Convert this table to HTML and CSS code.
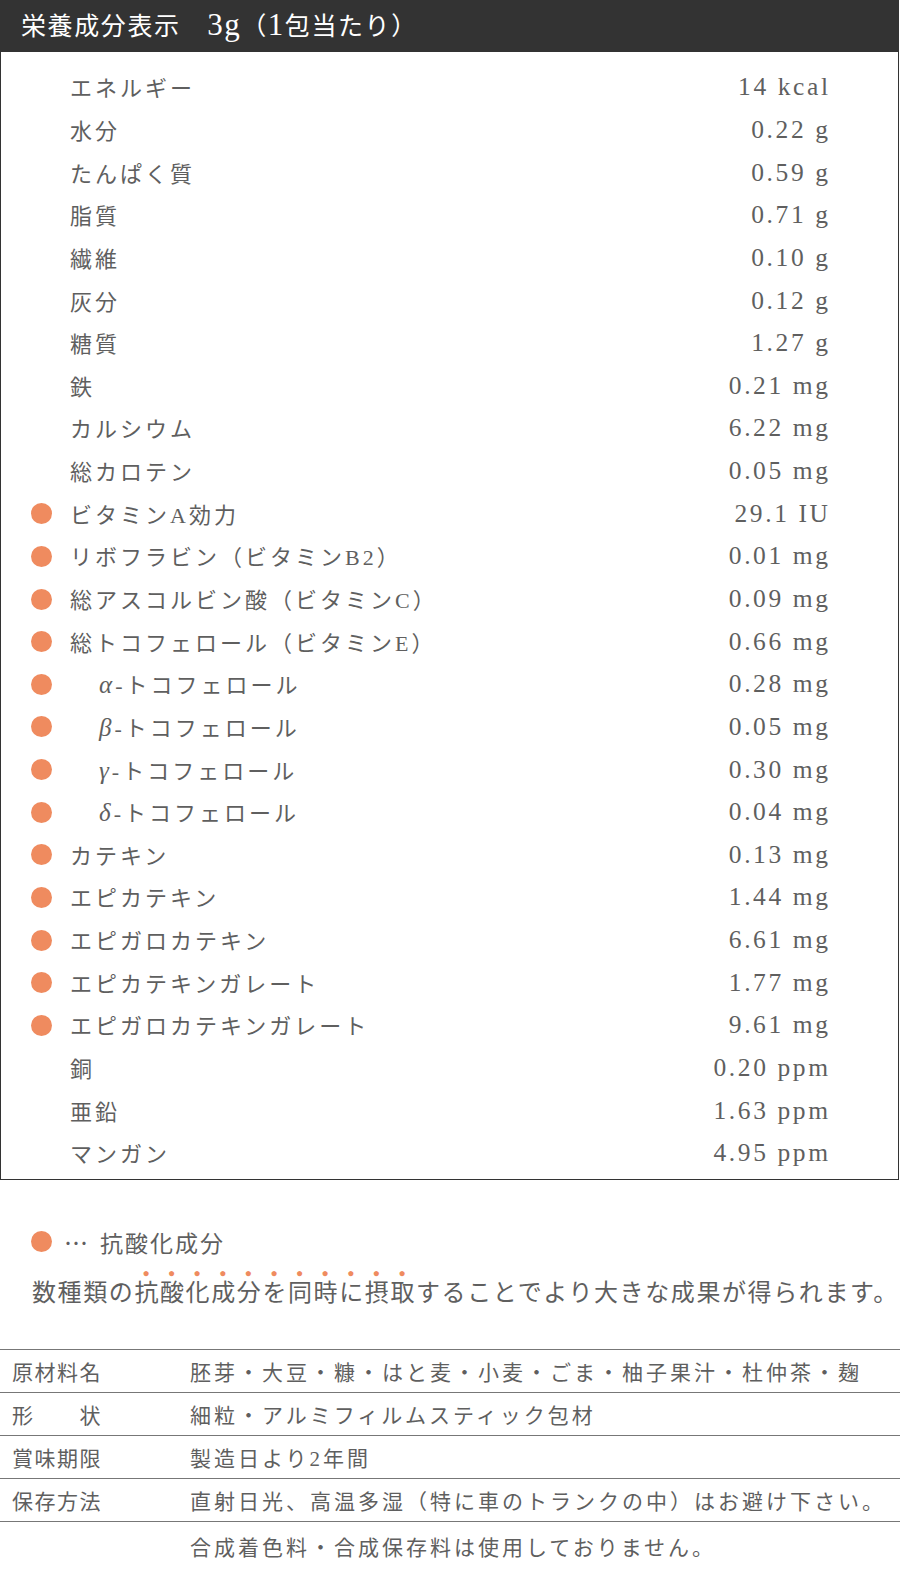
FILE: index.html
```html
<!DOCTYPE html>
<html lang="ja">
<head>
<meta charset="utf-8">
<link rel="stylesheet" href="styles.css">
</head>
<body>
<div class="nutrition">
  <div class="head">栄養成分表示　<span class="num">3g</span>（<span class="num">1</span>包当たり）</div>
  <ul class="rows">
    <li class="row"><span class="mark"></span><span class="name">エネルギー</span><span class="val">14 kcal</span></li>
    <li class="row"><span class="mark"></span><span class="name">水分</span><span class="val">0.22 g</span></li>
    <li class="row"><span class="mark"></span><span class="name">たんぱく質</span><span class="val">0.59 g</span></li>
    <li class="row"><span class="mark"></span><span class="name">脂質</span><span class="val">0.71 g</span></li>
    <li class="row"><span class="mark"></span><span class="name">繊維</span><span class="val">0.10 g</span></li>
    <li class="row"><span class="mark"></span><span class="name">灰分</span><span class="val">0.12 g</span></li>
    <li class="row"><span class="mark"></span><span class="name">糖質</span><span class="val">1.27 g</span></li>
    <li class="row"><span class="mark"></span><span class="name">鉄</span><span class="val">0.21 mg</span></li>
    <li class="row"><span class="mark"></span><span class="name">カルシウム</span><span class="val">6.22 mg</span></li>
    <li class="row"><span class="mark"></span><span class="name">総カロテン</span><span class="val">0.05 mg</span></li>
    <li class="row anti"><span class="mark"></span><span class="name">ビタミンA効力</span><span class="val">29.1 IU</span></li>
    <li class="row anti"><span class="mark"></span><span class="name">リボフラビン（ビタミンB2）</span><span class="val">0.01 mg</span></li>
    <li class="row anti"><span class="mark"></span><span class="name">総アスコルビン酸（ビタミンC）</span><span class="val">0.09 mg</span></li>
    <li class="row anti"><span class="mark"></span><span class="name">総トコフェロール（ビタミンE）</span><span class="val">0.66 mg</span></li>
    <li class="row anti sub"><span class="mark"></span><span class="name"><i>α</i>-トコフェロール</span><span class="val">0.28 mg</span></li>
    <li class="row anti sub"><span class="mark"></span><span class="name"><i>β</i>-トコフェロール</span><span class="val">0.05 mg</span></li>
    <li class="row anti sub"><span class="mark"></span><span class="name"><i>γ</i>-トコフェロール</span><span class="val">0.30 mg</span></li>
    <li class="row anti sub"><span class="mark"></span><span class="name"><i>δ</i>-トコフェロール</span><span class="val">0.04 mg</span></li>
    <li class="row anti"><span class="mark"></span><span class="name">カテキン</span><span class="val">0.13 mg</span></li>
    <li class="row anti"><span class="mark"></span><span class="name">エピカテキン</span><span class="val">1.44 mg</span></li>
    <li class="row anti"><span class="mark"></span><span class="name">エピガロカテキン</span><span class="val">6.61 mg</span></li>
    <li class="row anti"><span class="mark"></span><span class="name">エピカテキンガレート</span><span class="val">1.77 mg</span></li>
    <li class="row anti"><span class="mark"></span><span class="name">エピガロカテキンガレート</span><span class="val">9.61 mg</span></li>
    <li class="row"><span class="mark"></span><span class="name">銅</span><span class="val">0.20 ppm</span></li>
    <li class="row"><span class="mark"></span><span class="name">亜鉛</span><span class="val">1.63 ppm</span></li>
    <li class="row"><span class="mark"></span><span class="name">マンガン</span><span class="val">4.95 ppm</span></li>
  </ul>
</div>

<div class="legend"><span class="dot"></span><span class="ellipsis">…</span><span class="legend-text">抗酸化成分</span></div>
<p class="note">数種類の<em>抗酸化成分を同時に摂取</em>することでより大きな成果が得られます。</p>

<dl class="spec">
  <div class="spec-row"><dt>原材料名</dt><dd>胚芽・大豆・糠・はと麦・小麦・ごま・柚子果汁・杜仲茶・麹</dd></div>
  <div class="spec-row"><dt>形　　状</dt><dd>細粒・アルミフィルムスティック包材</dd></div>
  <div class="spec-row"><dt>賞味期限</dt><dd>製造日より2年間</dd></div>
  <div class="spec-row"><dt>保存方法</dt><dd>直射日光、高温多湿（特に車のトランクの中）はお避け下さい。</dd></div>
  <div class="spec-row last"><dt></dt><dd>合成着色料・合成保存料は使用しておりません。</dd></div>
</dl>
</body>
</html>
```

FILE: styles.css
```css
* { box-sizing: border-box; }
body {
  margin: 0;
  width: 900px;
  background: #fff;
  font-family: "Liberation Serif", "Noto Sans CJK JP", serif;
  color: #5f5f5f;
}
.nutrition {
  width: 899px;
  border: 1px solid #333;
  border-top: none;
}
.head {
  height: 52px;
  background: #333;
  color: #fff;
  font-size: 25px;
  letter-spacing: 1.6px;
  line-height: 53px;
  padding-left: 21px;
  margin: 0 -1px;
  white-space: nowrap;
}
.head .num {
  font-size: 31px;
  line-height: 0;
  letter-spacing: 1.5px;
}
.rows {
  list-style: none;
  margin: 0;
  padding: 14px 0 4px;
}
.row {
  display: grid;
  grid-template-columns: 69px 1fr auto;
  align-items: center;
  height: 42.65px;
  padding-right: 70px;
  font-size: 22px;
  letter-spacing: 3px;
}
.name { position: relative; top: -1px; }
.mark { display: block; }
.anti .mark {
  width: 21px;
  height: 21px;
  border-radius: 50%;
  background: #ef8b5f;
  margin-left: 30px;
}
.sub .name { padding-left: 29px; }
.name i { font-style: italic; font-size: 25px; letter-spacing: 3px; }
.val {
  font-size: 25.5px;
  letter-spacing: 2.6px;
  margin-right: -2.6px;
  text-align: right;
}
.legend {
  display: flex;
  align-items: center;
  margin-top: 50px;
  padding-left: 31px;
  height: 24px;
  font-size: 23px;
  letter-spacing: 2px;
}
.dot {
  width: 21px;
  height: 21px;
  border-radius: 50%;
  background: #ef8b5f;
}
.ellipsis {
  font-family: "Noto Sans CJK JP", sans-serif;
  font-size: 24px;
  letter-spacing: 0;
  margin-left: 12px;
  width: 36px;
}
.note {
  margin: 12px 0 0;
  padding-left: 32px;
  font-size: 24px;
  letter-spacing: 1.6px;
  line-height: 30px;
  white-space: nowrap;
}
.note em {
  font-style: normal;
  -webkit-text-emphasis: "●" #ef8b5f;
  text-emphasis: "●" #ef8b5f;
  text-emphasis-position: over;
}
.spec {
  margin: 41px 0 0;
  border-top: 1px solid #777;
}
.spec-row {
  display: grid;
  grid-template-columns: 190px 1fr;
  align-items: center;
  height: 43px;
  border-bottom: 1px solid #777;
  font-size: 21px;
  white-space: nowrap;
}
.spec-row.last { height: 50px; }
.spec dt {
  padding-left: 12px;
  letter-spacing: 1.5px;
}
.spec dd {
  margin: 0;
  letter-spacing: 3px;
}
```
